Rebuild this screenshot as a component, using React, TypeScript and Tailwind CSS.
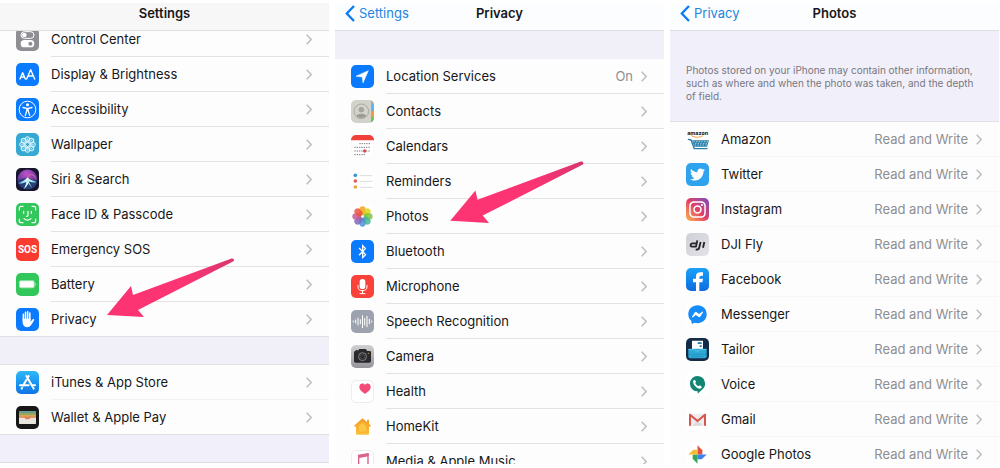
import React from "react";
import {
  FaBluetoothB,
  FaFacebookMessenger,
  FaInstagram,
  FaTwitter,
} from "react-icons/fa";

type RowData = { label: string; icon: React.ReactNode; value?: string; arrow?: string };

const tile = "flex size-[23px] shrink-0 items-center justify-center overflow-hidden rounded-[5px]";

function Art({ children, className = "" }: { children: React.ReactNode; className?: string }) {
  return (
    <span className={`${tile} ${className}`} aria-hidden="true">
      <svg viewBox="0 0 69 69" className="size-[23px] shrink-0" fill="none">
        {children}
      </svg>
    </span>
  );
}

const ControlCenterIcon = () => (
  <Art className="bg-[#8e8e93]">
    <rect x="15" y="11" width="39" height="20" rx="10" stroke="#fff" strokeWidth="3" />
    <circle cx="25" cy="21" r="7" fill="#fff" />
    <rect x="14" y="36" width="41" height="22" rx="11" fill="#fff" />
    <circle cx="43" cy="47" r="6" fill="#8e8e93" />
  </Art>
);

const DisplayIcon = () => (
  <Art className="bg-[#0a7aff]">
    <g stroke="#fff" strokeWidth="4.200" strokeLinejoin="round" strokeLinecap="round">
      <path d="M12 48 L20 29 L28 48 M15 42 H25" />
      <path d="M32 48 L44 20 L56 48 M36 39 H52" />
    </g>
  </Art>
);

const AccessibilityIcon = () => (
  <Art className="bg-[#0a7aff]">
    <circle cx="34.500" cy="34.500" r="25" stroke="#fff" strokeWidth="3" />
    <circle cx="34.500" cy="20.500" r="4.500" fill="#fff" />
    <path d="M21 28.500 L32 31 H37 L48 28.500 M34.500 31 V38 M32.500 31 V38 L28 52 M36.500 31 V38 L41 52" stroke="#fff" strokeWidth="4" strokeLinecap="round" strokeLinejoin="round" />
  </Art>
);

const WallpaperIcon = () => (
  <Art className="bg-[#35a9d4]">
    <g stroke="#e0f6fc" strokeWidth="3">
      <circle cx="34.500" cy="34.500" r="6" />
      {[0, 45, 90, 135, 180, 225, 270, 315].map((a) => (
        <g key={a} transform={`rotate(${a} 34.500 34.500)`}>
          <ellipse cx="34.500" cy="18.500" rx="7" ry="7.500" fill="#8fd3ea" fillOpacity=".4" />
          <path d="M34.500 28 V15" strokeWidth="1.500" />
        </g>
      ))}
    </g>
  </Art>
);

const SiriIcon = () => (
  <Art className="bg-[#17152e]">
    <defs>
      <radialGradient id="siri-a" cx="45%" cy="22%" r="65%">
        <stop offset="0" stopColor="#c055c8" />
        <stop offset=".6" stopColor="#7a3ea6" />
        <stop offset="1" stopColor="#28255a" />
      </radialGradient>
      <linearGradient id="siri-b" x1="0" y1="0" x2="1" y2="0">
        <stop offset="0" stopColor="#45a9e6" />
        <stop offset=".5" stopColor="#f2fdff" />
        <stop offset="1" stopColor="#4bd3c4" />
      </linearGradient>
    </defs>
    <circle cx="34.500" cy="34.500" r="30" fill="url(#siri-a)" />
    <path d="M5 40 C20 26 43 29 63 44 C59 57 47 64 34 64 C20 64 8 54 5 40Z" fill="#263f78" />
    <path d="M7 46 C20 40 28 36 35 28 C40 36 50 38 62 42 C52 45 44 43 39 40 C37 48 33 56 23 64 C28 53 31 46 31 42 C24 45 17 48 7 46Z" fill="url(#siri-b)" />
    <path d="M35 34 L48 60 L32 40Z" fill="#a5edf4" />
    <path d="M35 28 C43 13 56 20 60 34" stroke="#de65a4" strokeWidth="4" opacity=".7" />
  </Art>
);

const FaceIdIcon = () => (
  <Art className="bg-[#32c75a]">
    <g stroke="#fff" strokeWidth="3.500" strokeLinecap="round" strokeLinejoin="round">
      <path d="M10 21 V16 Q10 10 16 10 H21 M48 10 H53 Q59 10 59 16 V21 M59 48 V53 Q59 59 53 59 H48 M21 59 H16 Q10 59 10 53 V48" />
      <path d="M23 25 V31 M46 25 V31 M36 25 V37 Q36 40 32 40 M24 47 Q34.500 56 45 47" />
    </g>
  </Art>
);

const SosIcon = () => (
  <span className={`${tile} bg-[#fb3b30] font-[Roboto,sans-serif] text-[10px] font-bold text-white`} aria-hidden="true">SOS</span>
);

const BatteryIcon = () => (
  <Art className="bg-[#32c75a]">
    <rect x="9" y="22" width="47" height="24" rx="6" fill="#a5e8b5" />
    <rect x="12" y="25" width="41" height="18" rx="3" fill="#fff" />
    <path d="M58 29 Q63 34 58 39Z" fill="#d8f6df" />
  </Art>
);

const HandIcon = () => (
  <Art className="bg-[#0a7aff]">
    <g stroke="#fff" strokeLinecap="round" strokeWidth="4.600">
      <path d="M22 36 V19 M28.500 34 V13 M35 34 V11 M41.500 35 V15" />
      <path d="M45 45 L52 35" strokeWidth="5" />
    </g>
    <path d="M19.700 32 H43.800 V41 L49 36 L53 39 L45 52 Q41 58 34 58 Q24 58 21 49 Q19.700 45 19.700 41Z" fill="#fff" />
  </Art>
);

const AppStoreIcon = () => (
  <Art className="bg-linear-to-b from-[#2db8f7] to-[#1473e8]">
    <path d="M38 15 L21 44 M31 15 L49 46 M12 43 H38 M48 43 H57 M18 51 L17 53 M52 51 L53 53" stroke="#fff" strokeWidth="6" strokeLinecap="round" />
  </Art>
);

const WalletIcon = () => (
  <Art className="bg-[#171717]">
    <rect x="9" y="16" width="51" height="38" rx="4" fill="#dcdcca" />
    <path d="M9 20 Q9 16 13 16 H56 Q60 16 60 20 V23 H9Z" fill="#5f9a91" />
    <path d="M9 22 H60 V28 H9Z" fill="#a2a44d" />
    <path d="M9 28 H60 V33 H9Z" fill="#d29a49" />
    <path d="M9 33 H60 V37 H46 C42 37 43 43 34.500 43 C26 43 27 37 23 37 H9Z" fill="#e8795f" />
    <path d="M9 35 H23 C28 35 26 40 34.500 40 C43 40 41 35 46 35 H60 V51 Q60 54 56 54 H13 Q9 54 9 51Z" fill="#e7e6dd" />
  </Art>
);

const LocationIcon = () => (
  <Art className="bg-[#0a7aff]">
    <path d="M52 17 L36 54 L33.500 36 L15 33.500Z" fill="#fff" stroke="#fff" strokeWidth="1.500" strokeLinejoin="round" />
  </Art>
);

const ContactsIcon = () => (
  <Art className="bg-[#d2d1ca]">
    <path d="M60 0 H69 V12 H60Z" fill="#aaa" />
    <path d="M60 12 H69 V33 H60Z" fill="#56b9ef" />
    <path d="M60 33 H69 V51 H60Z" fill="#f79b37" />
    <path d="M60 51 H69 V69 H60Z" fill="#68c95b" />
    <circle cx="31" cy="34" r="22" stroke="#a4a39d" strokeWidth="2.500" />
    <circle cx="31" cy="29" r="8" fill="#aaa39e" />
    <path d="M16 47 C20 39 42 39 46 47 C39 56 23 56 16 47Z" fill="#9d9b95" />
  </Art>
);

const CalendarIcon = () => (
  <Art className="bg-white">
    <rect width="69" height="69" fill="#fff" stroke="#ececec" strokeWidth="2" />
    <path d="M0 0 H69 V16 H0Z" fill="#ef4039" />
    <g stroke="#777" strokeWidth="3" strokeDasharray="4 3">
      <path d="M25 26 H59 M10 37 H59 M10 48 H59 M10 59 H45" />
    </g>
    <circle cx="41" cy="48" r="5" fill="#e84545" />
  </Art>
);

const RemindersIcon = () => (
  <Art className="bg-white">
    <circle cx="13" cy="16" r="5.500" fill="#3798d4" />
    <circle cx="13" cy="33" r="5.500" fill="#e35c4d" />
    <circle cx="13" cy="51" r="5.500" fill="#eda43c" />
    <path d="M26 17 H65 M26 34 H65 M26 52 H65" stroke="#d5d5d8" strokeWidth="2.500" />
  </Art>
);

const petals = ["#f8a11b", "#dbd419", "#7fc441", "#45b990", "#4a91d5", "#7b69bc", "#c45c99", "#ee543b"];

const PhotosIcon = () => (
  <Art className="bg-white">
    {petals.map((color, i) => (
      <rect key={color} x="25" y="4" width="19" height="27" rx="9.500" fill={color} opacity=".85" transform={`rotate(${i * 45} 34.500 34.500)`} />
    ))}
    <circle cx="34.500" cy="34.500" r="3.500" fill="#fff" opacity=".8" />
  </Art>
);

const BluetoothIcon = () => (
  <span className={`${tile} bg-[#0a7aff] text-white`} aria-hidden="true">
    <FaBluetoothB className="size-[15px]" />
  </span>
);

const MicIcon = () => (
  <Art className="bg-[#f9423a]">
    <rect x="26" y="12" width="17" height="30" rx="8.500" fill="#fff" />
    <path d="M21 31 V35 Q21 47 34.500 47 Q48 47 48 35 V31 M34.500 47 V55 M27 56 H42" stroke="#fff" strokeWidth="3" strokeLinecap="round" />
  </Art>
);

const SpeechIcon = () => (
  <Art className="bg-[#9da3ae]">
    <path d="M7 33 V36 M14 30 V39 M21 24 V45 M28 29 V41 M34.500 17 V53 M41 25 V45 M48 19 V50 M55 28 V41 M62 33 V36" stroke="#fff" strokeWidth="3" strokeLinecap="round" />
  </Art>
);

const CameraIcon = () => (
  <Art className="bg-linear-to-b from-[#d0d0d3] to-[#96969a]">
    <path d="M9 22 Q9 18 14 18 H20 L25 12 H44 L49 18 H56 Q60 18 60 22 V48 Q60 53 55 53 H14 Q9 53 9 48Z" fill="#29292c" />
    <path d="M14 15 H20 V18 H14Z" fill="#29292c" />
    <circle cx="34.500" cy="35" r="12" fill="#2c2c2f" stroke="#8f8f92" strokeWidth="2.500" />
    <circle cx="34.500" cy="35" r="7" stroke="#555" strokeWidth="2" />
    <circle cx="52" cy="25" r="2" fill="#d0a54a" />
  </Art>
);

const HealthIcon = () => (
  <Art className="border border-[#ececef] bg-white">
    <path d="M42 42 C35 36 25 31 25 21 C25 9 38 8 42 15 C46 8 59 9 59 21 C59 31 49 36 42 42Z" fill="#f34c78" />
  </Art>
);

const HomeIcon = () => (
  <Art className="bg-white">
    <defs>
      <linearGradient id="home" x1="0" y1="0" x2="0" y2="1">
        <stop stopColor="#f59b24" />
        <stop offset="1" stopColor="#fac23d" />
      </linearGradient>
    </defs>
    <path d="M34.500 10 L48 21 V14 H54 V26 L60 32 L58 35 H54 V56 Q54 59 51 59 H18 Q15 59 15 56 V35 H11 L9 32Z" fill="url(#home)" />
    <path d="M34.500 22 L47 33 V51 H22 V33Z" fill="#fbc746" stroke="#f5aa2d" strokeWidth="2" />
  </Art>
);

const MusicIcon = () => (
  <Art className="border border-[#ededf0] bg-white">
    <path d="M23 53 V18 L51 12 V47" stroke="#d95b83" strokeWidth="4" />
    <path d="M21 14 L53 9 V19 L21 25Z" fill="#d9658c" />
    <ellipse cx="18" cy="54" rx="7" ry="5" fill="#7d6cc0" />
    <ellipse cx="46" cy="48" rx="7" ry="5" fill="#7d6cc0" />
  </Art>
);

const AmazonIcon = () => (
  <Art className="bg-white">
    <text x="35" y="20" textAnchor="middle" fontSize="16" fontWeight="800" fill="#282828">amazon</text>
    <path d="M16 23 Q34 33 51 23" stroke="#eea344" strokeWidth="3" />
    <path d="M7 34 L15 36 L25 62 H63" stroke="#287fa9" strokeWidth="4" strokeLinecap="round" strokeLinejoin="round" />
    <path d="M18 37 H69 L63 56 H25Z" fill="#287fa9" />
    <g stroke="#c2e4ef" strokeWidth="2.500" strokeDasharray="4 4">
      <path d="M22 41 H66 M27 46 H65 M26 51 H62" />
    </g>
  </Art>
);

const TwitterIcon = () => (
  <span className={`${tile} bg-[#2fa3ee] text-white`} aria-hidden="true">
    <FaTwitter className="size-[15px]" />
  </span>
);

const InstagramIcon = () => (
  <span className={`${tile} bg-linear-to-tr from-[#f9b23f] via-[#e23b66] to-[#7a3fc0] text-white`} aria-hidden="true">
    <FaInstagram className="size-[19px]" />
  </span>
);

const DjiIcon = () => (
  <Art className="bg-linear-to-br from-[#cfd0d6] to-[#e3e3e8]">
    <g stroke="#252529" strokeWidth="5.500" strokeLinejoin="round">
      <path d="M31 31 H19 Q15 31 14 36 Q13 41 18 41 H30 L34 22" />
      <path d="M44 27 L39 46 Q38 50 29 50" />
      <path d="M55 27 L51 44" />
    </g>
  </Art>
);

const FacebookIcon = () => (
  <Art className="bg-linear-to-b from-[#1aa2f8] to-[#116be0]">
    <path d="M30 69 V43 H21 V32 H30 V25 Q30 13 43 13 H51 V23 H46 Q40 23 40 29 V32 H51 L49 43 H40 V69Z" fill="#fff" />
  </Art>
);

const MessengerIcon = () => (
  <span className={`${tile} bg-white text-[#168bfa]`} aria-hidden="true">
    <FaFacebookMessenger className="size-[19px]" />
  </span>
);

const TailorIcon = () => (
  <Art className="bg-[#152c48]">
    <path d="M18 8 H51 V40 H18Z" fill="#fff" />
    <path d="M35 13 H47 V18 H35Z M41 22 H47 V27 H41Z" fill="#2379a8" />
    <path d="M7 32 H62 V55 Q62 61 56 61 H13 Q7 61 7 55Z" fill="#2ca9d6" />
    <path d="M7 35 H25 L29 39 H40 L44 35 H62" stroke="#6fd3ea" strokeWidth="2" />
    <path d="M7 49 H62 M17 55 H52" stroke="#1878a6" strokeWidth="2" strokeDasharray="4 3" />
  </Art>
);

const VoiceIcon = () => (
  <Art className="bg-white">
    <path d="M34.500 9 A23 23 0 0 1 47 51 L35 62 V55 A23 23 0 1 1 34.500 9Z" fill="#118574" />
    <path d="M25 20 L30 25 L28 31 Q31 37 37 40 L42 37 L48 43 Q45 48 40 47 Q24 43 21 26 Q21 22 25 20Z" fill="#fff" />
  </Art>
);

const GmailIcon = () => (
  <Art className="bg-white">
    <rect x="9" y="17" width="51" height="36" rx="3" fill="#ededed" />
    <path d="M18 53 L34.500 38 L51 53Z" fill="#dcdcdc" />
    <path d="M12 53 V20 L34.500 39 L57 20 V53" stroke="#d9544b" strokeWidth="6" strokeLinejoin="round" />
  </Art>
);

const GooglePhotosIcon = () => (
  <Art className="bg-white">
    <path d="M34.500 7 L49 22 V34.500 H34.500Z" fill="#df5145" />
    <path d="M62 34.500 L47 49 H34.500 V34.500Z" fill="#3d82e8" />
    <path d="M34.500 62 L20 47 V34.500 H34.500Z" fill="#32a65a" />
    <path d="M7 34.500 L22 20 H34.500 V34.500Z" fill="#f5bd32" />
  </Art>
);

const settingsTop: RowData[] = [
  { label: "Control Center", icon: <ControlCenterIcon /> },
  { label: "Display & Brightness", icon: <DisplayIcon /> },
  { label: "Accessibility", icon: <AccessibilityIcon /> },
  { label: "Wallpaper", icon: <WallpaperIcon /> },
  { label: "Siri & Search", icon: <SiriIcon /> },
  { label: "Face ID & Passcode", icon: <FaceIdIcon /> },
  { label: "Emergency SOS", icon: <SosIcon /> },
  { label: "Battery", icon: <BatteryIcon /> },
  { label: "Privacy", icon: <HandIcon />, arrow: "bottom-[17px] left-[106px] h-[62px] w-[136px]" },
];

const settingsStore: RowData[] = [
  { label: "iTunes & App Store", icon: <AppStoreIcon /> },
  { label: "Wallet & Apple Pay", icon: <WalletIcon /> },
];

const privacyRows: RowData[] = [
  { label: "Location Services", value: "On", icon: <LocationIcon /> },
  { label: "Contacts", icon: <ContactsIcon /> },
  { label: "Calendars", icon: <CalendarIcon /> },
  { label: "Reminders", icon: <RemindersIcon /> },
  { label: "Photos", icon: <PhotosIcon />, arrow: "bottom-[9px] left-[114px] h-[65px] w-[143px]" },
  { label: "Bluetooth", icon: <BluetoothIcon /> },
  { label: "Microphone", icon: <MicIcon /> },
  { label: "Speech Recognition", icon: <SpeechIcon /> },
  { label: "Camera", icon: <CameraIcon /> },
  { label: "Health", icon: <HealthIcon /> },
  { label: "HomeKit", icon: <HomeIcon /> },
  { label: "Media & Apple Music", icon: <MusicIcon /> },
];

const access = "Read and Write";

const photoRows: RowData[] = [
  { label: "Amazon", value: access, icon: <AmazonIcon /> },
  { label: "Twitter", value: access, icon: <TwitterIcon /> },
  { label: "Instagram", value: access, icon: <InstagramIcon /> },
  { label: "DJI Fly", value: access, icon: <DjiIcon /> },
  { label: "Facebook", value: access, icon: <FacebookIcon /> },
  { label: "Messenger", value: access, icon: <MessengerIcon /> },
  { label: "Tailor", value: access, icon: <TailorIcon /> },
  { label: "Voice", value: access, icon: <VoiceIcon /> },
  { label: "Gmail", value: access, icon: <GmailIcon /> },
  { label: "Google Photos", value: access, icon: <GooglePhotosIcon /> },
];

function PointerArrow({ place }: { place: string }) {
  return (
    <svg viewBox="0 0 136 62" className={`pointer-events-none absolute z-20 ${place}`} aria-hidden="true">
      <defs>
        <linearGradient id="pointer" x1="0" x2="1">
          <stop offset=".6" stopColor="#fd3473" />
          <stop offset="1" stopColor="#d8366e" />
        </linearGradient>
      </defs>
      <path d="M1 58 L25 29 L27 38 L125.500 1.500 Q128 1 128 3 Q128 4 127 4.500 L32 53 L38 60Z" fill="url(#pointer)" />
    </svg>
  );
}

function Row({ row, line, last }: { row: RowData; line: string; last: boolean }) {
  return (
    <li className={`relative h-[35px] ${last ? "border-b border-[#dedee3]" : ""}`}>
      <a href="#" className="flex h-full items-center gap-3 pl-4">
        {row.icon}
        <span className={`flex h-full min-w-0 flex-1 items-center gap-2 pr-[17px] whitespace-nowrap ${last ? "" : `border-b ${line}`}`}>
          <span className="flex-1 pt-0.5">{row.label}</span>
          {row.value && <span className="pt-0.5 text-[#8e8e92]">{row.value}</span>}
          <svg viewBox="0 0 6 11" className="h-[11px] w-[6px]" fill="none" stroke="#bdbdc1" strokeWidth="1.500" aria-hidden="true">
            <path d="M.7 .8 L5.200 5.500 L.7 10.200" />
          </svg>
        </span>
      </a>
      {row.arrow && <PointerArrow place={row.arrow} />}
    </li>
  );
}

function Rows({ rows, line = "border-[#e2e2e4]", className = "" }: { rows: RowData[]; line?: string; className?: string }) {
  return (
    <ul className={className}>
      {rows.map((row, i) => (
        <Row key={row.label} row={row} line={line} last={i === rows.length - 1} />
      ))}
    </ul>
  );
}

function Header({ title, back, className }: { title: string; back?: string; className: string }) {
  return (
    <header className={`relative z-10 grid h-7 grid-cols-[1fr_auto_1fr] border-b border-[#dedee2] leading-5 ${className}`}>
      <div>
        {back && (
          <a href="#" className="flex items-center gap-1 pl-[10px] text-[#2385e0]">
            <svg viewBox="0 0 10 17" className="h-[17px] w-[10px]" fill="none" stroke="#087cf5" strokeWidth="2.300" aria-hidden="true">
              <path d="M9 1 L1.800 8.500 L9 16" />
            </svg>
            {back}
          </a>
        )}
      </div>
      <h2 className="font-semibold">{title}</h2>
    </header>
  );
}

const panel = "min-w-0 overflow-hidden bg-[#fdfdfd]";

export default function App() {
  return (
    <main className="grid h-screen grid-cols-3 gap-[6px] overflow-hidden bg-white pt-[3px] pr-px pb-1 font-[Inter,sans-serif] text-[13px] text-[#171719]">
      <section className={panel}>
        <Header title="Settings" className="bg-[#f7f7f7]" />
        <Rows rows={settingsTop} className="-mt-[9px]" />
        <div className="h-7 border-b border-[#e2e2e7] bg-[#f1f0f9]" />
        <Rows rows={settingsStore} line="border-[#f1f1f3]" />
        <div className="h-7 border-b border-[#dcdce2] bg-[#f1f0fa]" />
      </section>
      <section className={panel}>
        <Header title="Privacy" back="Settings" className="bg-[#fbfdfe]" />
        <div className="h-7 bg-[#f1f0f9]" />
        <Rows rows={privacyRows} />
      </section>
      <section className={panel}>
        <Header title="Photos" back="Privacy" className="bg-[#fcfdfe]" />
        <div className="border-b border-[#dfdfe5] bg-[#f1f0fa] px-4 pt-[33px] pb-[18px]">
          <p className="text-[10px] leading-[13px] text-[#77777f]">
            Photos stored on your iPhone may contain other information, such as where and when the photo was taken, and the depth of field.
          </p>
        </div>
        <Rows rows={photoRows} line="border-[#f6f6f7]" />
      </section>
    </main>
  );
}
